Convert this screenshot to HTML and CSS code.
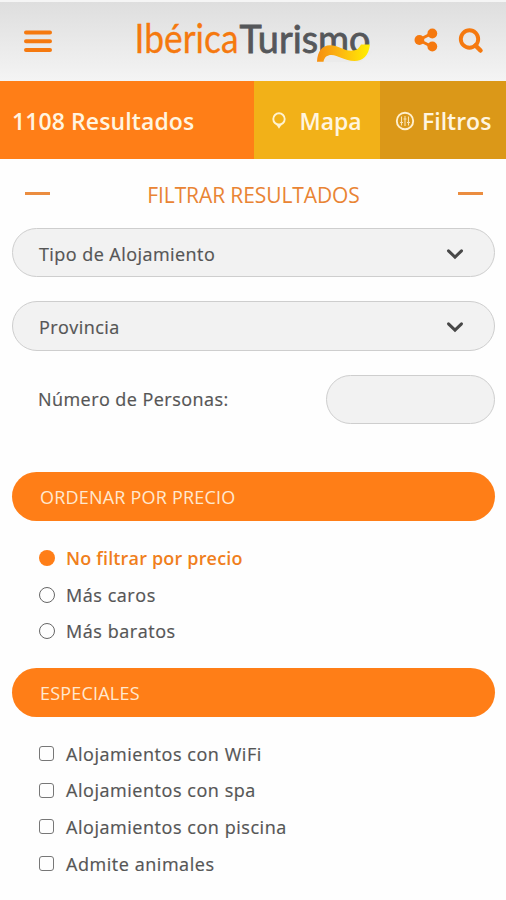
FILE: index.html
```html
<!DOCTYPE html>
<html lang="es">
<head>
<meta charset="utf-8">
<title>IbéricaTurismo</title>
<link rel="stylesheet" href="styles.css">
</head>
<body>
<header class="topbar">
  <svg class="menu" width="28" height="24" viewBox="0 0 28 24"><path d="M2 3.500H26M2 12.300H26M2 21.100H26" stroke="#f5790f" stroke-width="4" stroke-linecap="round"/></svg>
  <svg class="logo" width="240" height="60" viewBox="134 14 240 60">
    <defs><linearGradient id="wave" x1="0" x2="1"><stop offset="0" stop-color="#f58f12"/><stop offset=".45" stop-color="#fdb811"/><stop offset="1" stop-color="#fff000"/></linearGradient></defs>
    <text class="logo-a" x="134.500" y="53.300" textLength="104" lengthAdjust="spacingAndGlyphs">Ibérica</text>
    <text class="logo-b" x="239.500" y="53.300" textLength="131" lengthAdjust="spacingAndGlyphs">Turismo</text>
    <path d="M321 53L332 49L354 55L371 44.500L372 52L360 62H322Z" fill="#ebebeb"/>
    <path d="M317 61.700C317.500 51.500 322 45.200 330 45.200C338 45.200 344 50.700 351 50.700C357 50.700 359 48 361 44.500H370C368.500 56 363 61 354.500 61C344.500 61 338 55 331.500 55C327 55 324.500 57 323.500 61.700Z" fill="url(#wave)"/>
  </svg>
  <svg class="share" width="24" height="24" viewBox="0 0 24 24"><path d="M18.500 5L5 12L18.500 19" fill="none" stroke="#f5790f" stroke-width="3"/><g fill="#f5790f"><circle cx="18.300" cy="5.500" r="4.900"/><circle cx="5.400" cy="12" r="4.900"/><circle cx="18.300" cy="18.500" r="4.900"/></g></svg>
  <svg class="search" width="26" height="26" viewBox="0 0 26 26" fill="none" stroke="#f5790f"><circle cx="11.500" cy="11" r="8.700" stroke-width="3.900"/><path d="M17.500 17.500L22.500 22.500" stroke-width="4.500" stroke-linecap="round"/></svg>
</header>
<nav class="tabs">
  <div class="results"><span>1108 Resultados</span></div>
  <div class="map"><svg width="16" height="19" viewBox="0 0 16 19" fill="none" stroke="#fff3d0" stroke-width="1.900"><circle cx="8" cy="7" r="5.700"/><path d="M6 12.500H10L8 15.500Z" stroke-width="1.300" fill="#fff3d0"/></svg><span>Mapa</span></div>
  <div class="filters"><svg width="20" height="20" viewBox="0 0 20 20" fill="none" stroke="#fff0cf"><circle cx="10" cy="10" r="8.200" stroke-width="1.900"/><path d="M6.500 5.500V14.500M10 5V15M13.500 5.500V14.500M5 11.500H8M8.500 8H11.500M12 11.500H15" stroke-width="1.100" opacity=".85"/></svg><span>Filtros</span></div>
</nav>
<main>
  <h1 class="title"><i class="dash"></i><span>FILTRAR RESULTADOS</span><i class="dash"></i></h1>
  <div class="field"><span>Tipo de Alojamiento</span><svg width="18" height="12" viewBox="0 0 18 12"><path d="M2.500 2.800L9 9.100L15.500 2.800" fill="none" stroke="#484848" stroke-width="3" stroke-linecap="round"/></svg></div>
  <div class="field"><span>Provincia</span><svg width="18" height="12" viewBox="0 0 18 12"><path d="M2.500 2.800L9 9.100L15.500 2.800" fill="none" stroke="#484848" stroke-width="3" stroke-linecap="round"/></svg></div>
  <div class="people"><span>Número de Personas:</span><div class="box"></div></div>
  <h2 class="section first"><span>ORDENAR POR PRECIO</span></h2>
  <ul class="options">
    <li class="active"><i class="radio"></i><span>No filtrar por precio</span></li>
    <li><i class="radio"></i><span>Más caros</span></li>
    <li><i class="radio"></i><span>Más baratos</span></li>
  </ul>
  <h2 class="section"><span>ESPECIALES</span></h2>
  <ul class="options">
    <li><i class="check"></i><span>Alojamientos con WiFi</span></li>
    <li><i class="check"></i><span>Alojamientos con spa</span></li>
    <li><i class="check"></i><span>Alojamientos con piscina</span></li>
    <li><i class="check"></i><span>Admite animales</span></li>
  </ul>
</main>
</body>
</html>
```
FILE: styles.css
```css
* { box-sizing: border-box; }
body { margin: 0; height: 900px; overflow: hidden; background: #fefefe; font-family: "Open Sans", sans-serif; font-size: 18px; color: #555; }
svg { display: block; flex: none; }
span { white-space: nowrap; }
.topbar { height: 81px; display: flex; align-items: flex-start; border-top: 2px solid #f5f5f5; background: linear-gradient(#dedede, #f4f4f4); }
.menu { margin: 27px 0 0 24px; }
.logo { margin: 12px 0 0 82px; overflow: visible; }
.share { margin: 26px 0 0 40px; }
.search { margin: 26px 0 0 20px; }
.logo-a, .logo-b { font-family: Lato, sans-serif; font-size: 40px; }
.logo-a { fill: #f5790f; stroke: #f5790f; stroke-width: .3px; }
.logo-b { fill: #55575a; stroke: #55575a; stroke-width: .8px; font-size: 38.500px; }
.tabs { height: 78px; display: grid; grid-template-columns: 253.500px 126.500px 126px; font-size: 23px; font-weight: 600; color: #fff5e0; }
.tabs > div { display: flex; align-items: center; padding-top: 2px; }
.results { background: #ff7e17; padding-left: 12px; letter-spacing: .1px; }
.map { background: #f2b118; padding-left: 17px; gap: 13px; }
.filters { background: #db9818; padding-left: 15px; gap: 7px; }
main { padding: 0 12px 0 12px; }
.title { margin: 0; height: 68.500px; padding: 3px 11.500px 0 12.500px; display: flex; align-items: center; justify-content: space-between; font-size: 21px; letter-spacing: -.1px; font-weight: 400; color: #e98434; }
.dash { width: 25px; height: 3px; background: #eb8d40; margin-top: -2px; }
.field { width: 482.500px; height: 49.500px; margin-bottom: 24px; padding: 3px 29.500px 0 26px; border: 1px solid #cecece; border-radius: 25px; background: #f2f2f2; display: flex; align-items: center; justify-content: space-between; }
.field, .people, .options { letter-spacing: .45px; -webkit-text-stroke: .2px currentColor; }
.people { width: 482.500px; height: 49.500px; padding-left: 26px; display: flex; justify-content: space-between; align-items: center; }
.box { width: 169px; height: 49.500px; border: 1px solid #cecece; border-radius: 25px; background: #f2f2f2; }
.section { width: 482.500px; height: 49px; margin: 0; padding: 1px 0 0 28px; border-radius: 25px; background: #ff7e17; color: #ffe8cf; display: flex; align-items: center; font-size: 18px; letter-spacing: .2px; font-weight: 400; }
.section.first { margin-top: 48px; }
.options { list-style: none; margin: 0; padding: 19px 0 0 27px; height: 146.500px; letter-spacing: .55px; }
.options li { height: 36.600px; display: flex; align-items: center; gap: 11px; }
.options .active { color: #f07f1c; font-weight: 600; letter-spacing: .17px; -webkit-text-stroke: 0; }
.radio { width: 16px; height: 16px; border: 1.500px solid #666; border-radius: 50%; }
.active .radio { border: 0; background: #ff7e17; }
.check { width: 15px; height: 15px; margin-right: 1px; border: 1px solid #777; border-radius: 3px; }
```
